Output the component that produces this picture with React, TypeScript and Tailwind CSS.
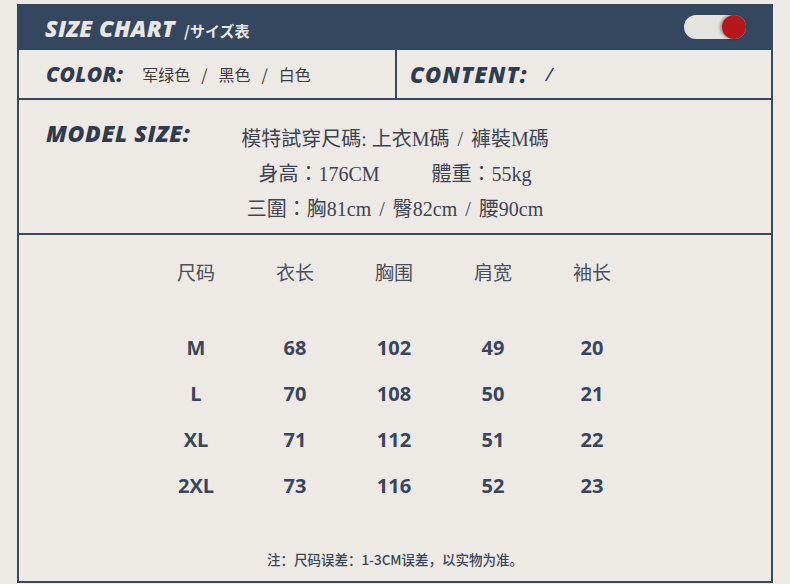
import React from "react";

const heavy = { fontFamily: '"Open Sans", "Noto Sans CJK SC", sans-serif' };
const serif = { fontFamily: '"Liberation Serif", "Noto Sans CJK TC", serif' };
const cjk = { fontFamily: '"Noto Sans CJK SC", sans-serif' };

const headers = ["尺码", "衣长", "胸围", "肩宽", "袖长"];
const rows = [
  ["M", "68", "102", "49", "20"],
  ["L", "70", "108", "50", "21"],
  ["XL", "71", "112", "51", "22"],
  ["2XL", "73", "116", "52", "23"],
];

function Sl() {
  return <span className="mx-[8px]">/</span>;
}

export default function App() {
  return (
    <div className="w-[790px] h-[584px] bg-[#edeae6] pt-[4px] pl-[17px] overflow-hidden">
      <div className="w-[756px] h-[579px] flex flex-col">
        {/* Header */}
        <div className="h-[46px] bg-[#34475f] flex items-center justify-between pl-[28px] pr-[27px] pt-[2px] shrink-0">
          <div className="flex items-baseline text-[#e9e7e4]">
            <span style={heavy} className="text-[23px] font-extrabold italic tracking-[0.4px] leading-none">
              SIZE CHART
            </span>
            <span style={cjk} className="ml-[9px] text-[15px] font-bold leading-none">
              /サイズ表
            </span>
          </div>
          <div className="w-[62px] h-[24px] rounded-full bg-[#e5e3e0] flex justify-end mb-[2px]">
            <div className="w-[24px] h-[24px] rounded-full bg-[#b3181d] shadow-[-2px_0_3px_rgba(0,0,0,0.35)]" />
          </div>
        </div>

        {/* Body */}
        <div className="flex-1 flex flex-col border-x-2 border-b-2 border-[#3a4659]">
          {/* Color / content row */}
          <div className="h-[50px] flex border-b-2 border-[#3a4659] shrink-0">
            <div className="w-[378px] flex items-center pl-[27px] border-r-2 border-[#3a4659]">
              <span style={heavy} className="text-[21px] font-extrabold italic tracking-[0.3px] text-[#2f3b4e] leading-none">
                COLOR:
              </span>
              <span style={cjk} className="ml-[19px] text-[16px] text-[#3b3b3d] flex items-center">
                军绿色<span className="mx-[11px]">/</span>黑色<span className="mx-[11px]">/</span>白色
              </span>
            </div>
            <div className="flex-1 flex items-center pl-[13px]">
              <span style={heavy} className="text-[22px] font-extrabold italic tracking-[1.2px] text-[#2f3b4e] leading-none">
                CONTENT:
              </span>
              <span style={heavy} className="ml-[18px] text-[19px] italic text-[#2f3b4e] leading-none">
                /
              </span>
            </div>
          </div>

          {/* Model size */}
          <div className="h-[135px] grid grid-cols-[1fr_auto_1fr] border-b-2 border-[#3a4659] shrink-0">
            <div className="pl-[27px] pt-[17px]">
              <span style={heavy} className="text-[23px] font-extrabold italic tracking-[0.6px] text-[#2f3b4e] leading-[32px] whitespace-nowrap">
                MODEL SIZE:
              </span>
            </div>
            <div style={serif} className="pt-[22px] flex flex-col items-center text-[20px] leading-[35px] text-[#3e4350]">
              <div className="whitespace-nowrap">
                模特試穿尺碼: 上衣M碼<Sl />褲裝M碼
              </div>
              <div className="flex gap-[52px] whitespace-nowrap">
                <span>身高：176CM</span>
                <span>體重：55kg</span>
              </div>
              <div className="whitespace-nowrap">
                三圍：胸81cm<Sl />臀82cm<Sl />腰90cm
              </div>
            </div>
            <div />
          </div>

          {/* Table */}
          <div className="flex-1 flex flex-col items-center">
            <div className="mt-[14px] grid grid-cols-[repeat(5,99px)] h-[46px] items-center -translate-x-[1px]">
              {headers.map((h) => (
                <div key={h} style={cjk} className="text-center text-[19px] text-[#4a4f5b]">
                  {h}
                </div>
              ))}
            </div>
            <div className="mt-[30px] flex flex-col -translate-x-[1px]">
              {rows.map((r) => (
                <div key={r[0]} className="grid grid-cols-[repeat(5,99px)] h-[46px] items-center">
                  {r.map((c, i) => (
                    <div key={i} style={heavy} className="text-center text-[20px] font-bold text-[#39455a]">
                      {c}
                    </div>
                  ))}
                </div>
              ))}
            </div>
            <div className="flex-1" />
            <div style={cjk} className="pb-[12px] text-[13.5px] leading-[20px] font-medium text-[#3a4556]">
              注：尺码误差：1-3CM误差，以实物为准。
            </div>
          </div>
        </div>
      </div>
    </div>
  );
}
